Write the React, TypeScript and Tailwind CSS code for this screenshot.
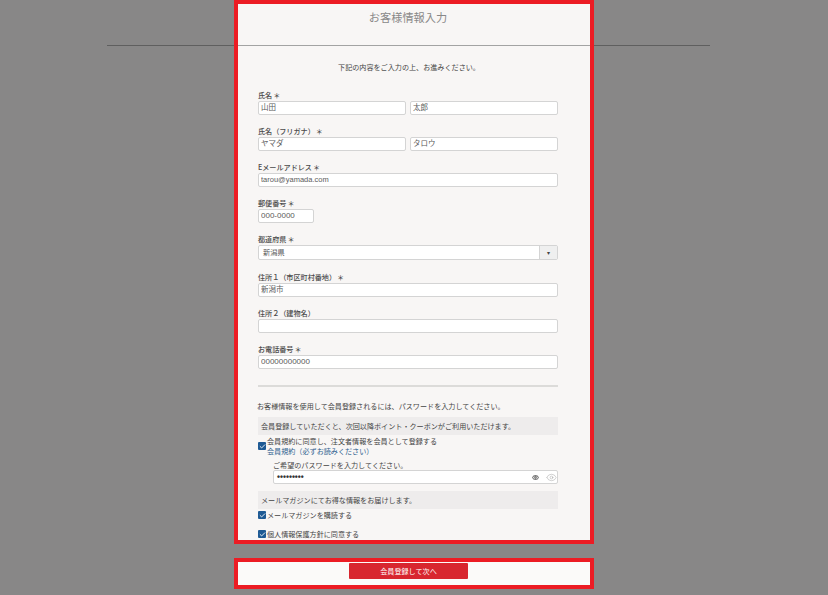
import { Check, Eye } from 'lucide-react'

const font = { fontFamily: '"Noto Sans CJK JP", "Liberation Sans", sans-serif' }
const inputFont = { fontFamily: '"Liberation Sans", "Noto Sans CJK JP", sans-serif' }

function Label({ text, required = true }: { text: string; required?: boolean }) {
  return (
    <div className="h-[10px] mb-[1px] text-[7.1px] leading-[10px] font-medium text-[#4a4a4a] whitespace-nowrap">
      {text}
      {required && <span className="ml-[1px]">＊</span>}
    </div>
  )
}

function Input({ value, className = 'w-full' }: { value: string; className?: string }) {
  const size = /^[0-9-]+$/.test(value) ? 'text-[8px]' : 'text-[7.5px]'
  return (
    <div
      className={`h-[14px] bg-white border border-[#d4d4d4] rounded-[2px] px-[2px] leading-[11px] whitespace-nowrap ${size} ${className}`}
      style={inputFont}
    >
      <span className="opacity-90 text-[#4a4a4a]">{value}</span>
    </div>
  )
}

function Field({ label, value, required }: { label: string; value: string; required?: boolean }) {
  return (
    <div className="mb-[11px]">
      <Label text={label} required={required} />
      <Input value={value} />
    </div>
  )
}

function NameField({ label, first, last }: { label: string; first: string; last: string }) {
  return (
    <div className="mb-[11px]">
      <Label text={label} />
      <div className="flex gap-[4px]">
        <Input value={first} className="flex-1" />
        <Input value={last} className="flex-1" />
      </div>
    </div>
  )
}

function Box() {
  return (
    <span className="w-[8px] h-[8px] shrink-0 rounded-[1px] bg-[#1f5a94] flex items-center justify-center">
      <Check size={7} strokeWidth={3} className="text-white" />
    </span>
  )
}

export default function App() {
  return (
    <div className="relative w-[828px] h-[595px] overflow-hidden bg-[#888787]" style={font}>
      {/* rule behind the panel */}
      <div className="absolute left-[107px] top-[45px] w-[603px] h-px bg-[#5f5f5f]" />

      <div className="relative ml-[234px] w-[360px] h-[544px] border-4 border-[#ec1c24] bg-[#f8f6f5] overflow-hidden">
        <div className="h-[42px] border-b border-[#a3a3a3] pt-[6px] pr-[12px] text-center text-[11.2px] leading-[14px] text-[#888]">
          お客様情報入力
        </div>

        <div className="mt-[16px] h-[10px] mb-[18px] pr-[10px] text-center text-[7.1px] leading-[10px] text-[#444]">
          下記の内容をご入力の上、お進みください。
        </div>

        <div className="pl-[20px] pr-[32px]">
          <NameField label="氏名" first="山田" last="太郎" />
          <NameField label="氏名（フリガナ）" first="ヤマダ" last="タロウ" />
          <Field label="Eメールアドレス" value="tarou@yamada.com" />

          <div className="mb-[11px]">
            <Label text="郵便番号" />
            <Input value="000-0000" className="w-[56px]" />
          </div>

          <div className="mb-[12px]">
            <Label text="都道府県" />
            <div className="h-[15px] flex bg-white border border-[#d4d4d4] rounded-[2px] text-[7.2px] leading-[13px] text-[#555]">
              <span className="flex-1 pl-[4px]">新潟県</span>
              <span className="w-[18px] bg-[#efefef] border-l border-[#d4d4d4] text-center text-[6px] leading-[13px] text-[#444]">
                ▾
              </span>
            </div>
          </div>

          <Field label="住所１（市区町村番地）" value="新潟市" />
          <Field label="住所２（建物名）" value="" required={false} />
          <Field label="お電話番号" value="00000000000" />

          <div className="h-[2px] bg-[#dcdbd9] mt-[16px] mb-[14px]" />

          <div className="h-[10px] text-[7.1px] leading-[10px] text-[#444] -ml-[1px] whitespace-nowrap">
            お客様情報を使用して会員登録されるには、パスワードを入力してください。
          </div>

          <div className="mt-[6px] h-[18px] bg-[#eeecec] px-[3px] text-[7.1px] leading-[18px] text-[#444] whitespace-nowrap">
            会員登録していただくと、次回以降ポイント・クーポンがご利用いただけます。
          </div>

          <div className="mt-[1px] flex items-center gap-[1px] text-[7.1px] leading-[10px] text-[#444]">
            <Box />
            <div>
              <div>会員規約に同意し、注文者情報を会員として登録する</div>
              <div className="text-[#2f5f8f]">会員規約（必ずお読みください）</div>
            </div>
          </div>

          <div className="ml-[15px]">
            <div className="mt-[4px] h-[10px] text-[7.1px] leading-[10px] text-[#444]">
              ご希望のパスワードを入力してください。
            </div>
            <div className="h-[14px] flex items-center bg-white border border-[#d4d4d4] rounded-[2px] pl-[3px] text-[#333]">
              <span className="flex-1 text-[8.5px] font-bold" style={inputFont}>•••••••••</span>
              <Eye size={7} strokeWidth={3.5} className="text-[#777] mr-[7px]" />
              <Eye size={11} strokeWidth={1} className="text-[#999]" />
            </div>
          </div>

          <div className="mt-[7px] h-[18px] bg-[#eeecec] px-[3px] text-[7.1px] leading-[18px] text-[#444]">
            メールマガジンにてお得な情報をお届けします。
          </div>

          <div className="h-[12px] flex items-center gap-[1px] text-[7.1px] text-[#444]">
            <Box />
            メールマガジンを購読する
          </div>

          <div className="mt-[7px] h-[12px] flex items-center gap-[1px] text-[7.1px] text-[#444]">
            <Box />
            個人情報保護方針に同意する
          </div>
        </div>
      </div>

      <div className="mt-[14px] ml-[234px] w-[360px] h-[31px] border-4 border-[#ec1c24] bg-[#fbfaf9] flex justify-center pt-[1px] pr-[11px]">
        <div className="w-[119px] h-[16px] rounded-[1px] bg-[#d8262f] text-center text-[7.1px] leading-[16px] text-white">
          会員登録して次へ
        </div>
      </div>
    </div>
  )
}
